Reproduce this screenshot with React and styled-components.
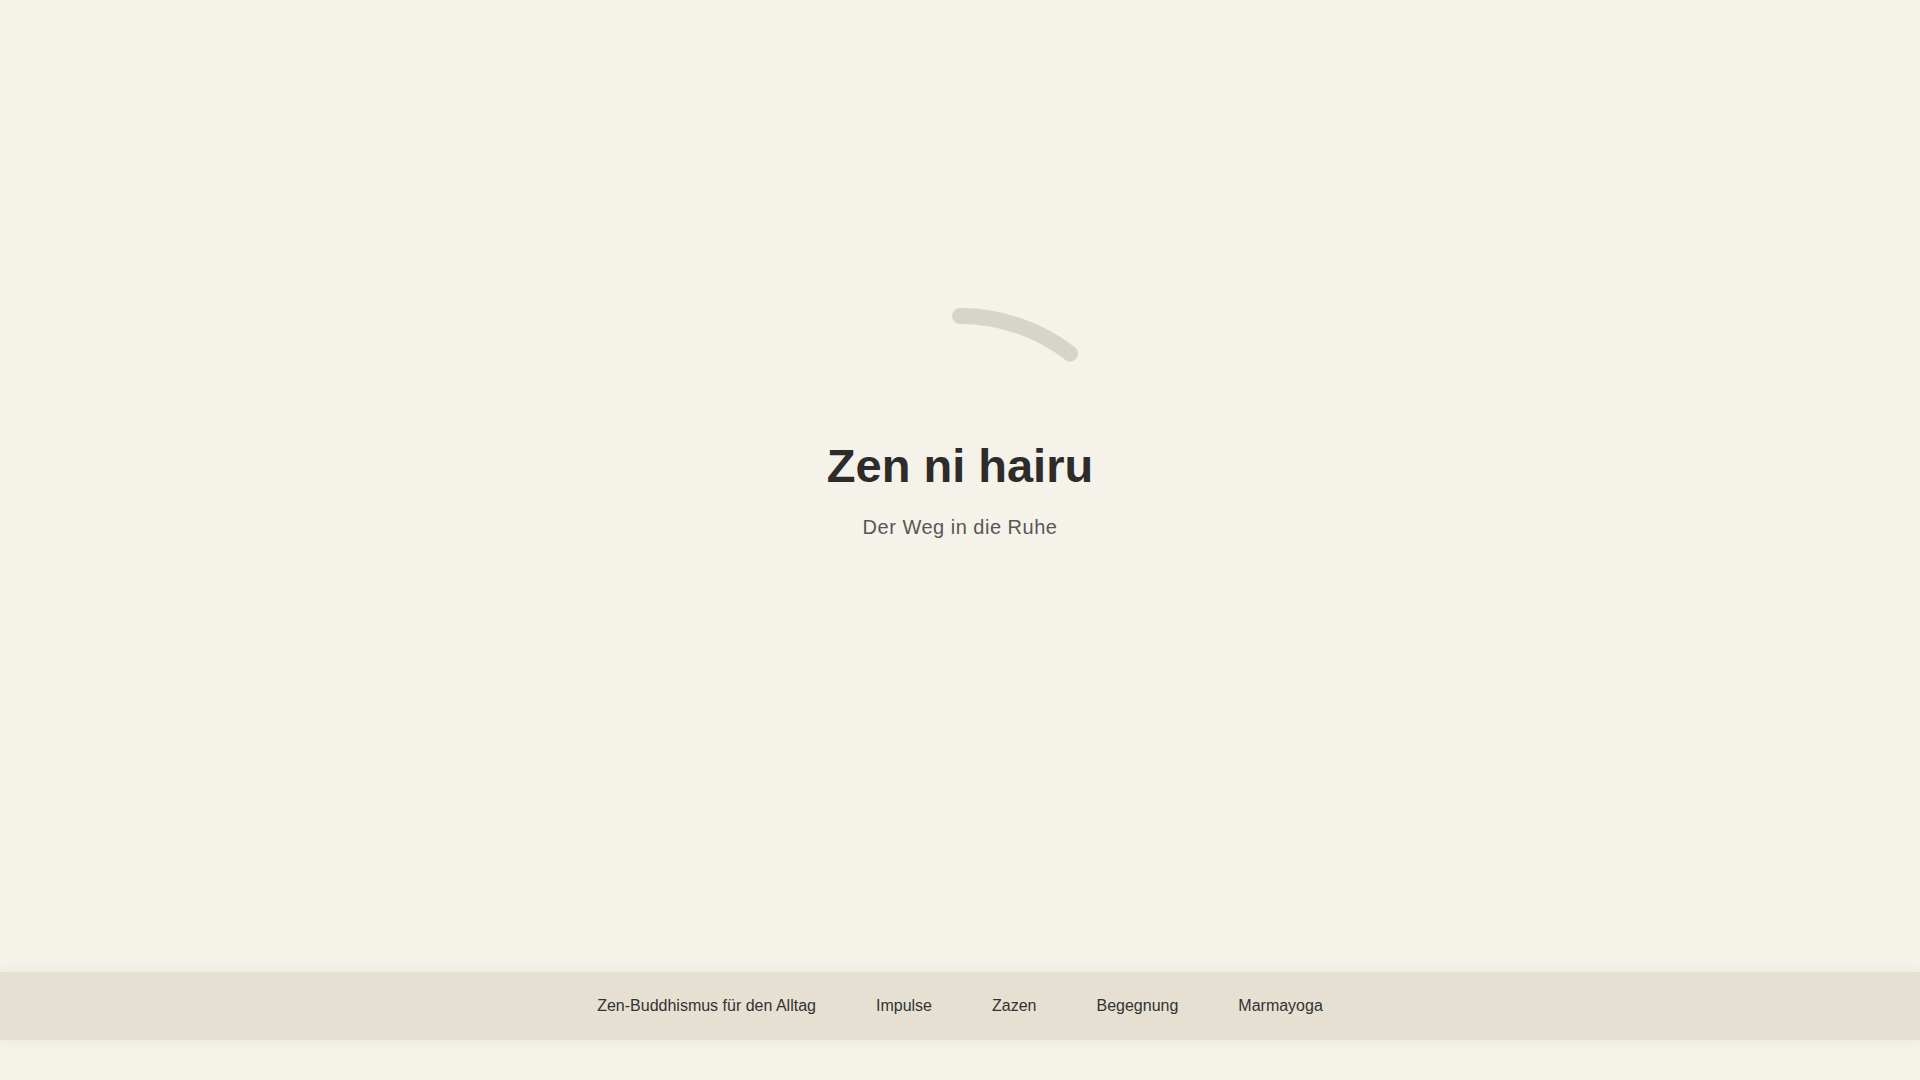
import React from 'react';
import styled, { createGlobalStyle } from 'styled-components';

const GlobalStyle = createGlobalStyle`
  html, body {
    margin: 0;
    padding: 0;
    background: #f5f2ea;
    font-family: 'Liberation Sans', Arial, sans-serif;
  }
  * { box-sizing: border-box; }
`;

const Page = styled.div`
  min-height: 100vh;
  display: flex;
  flex-direction: column;
  background: #f5f2ea;
`;

const Main = styled.main`
  flex: 1;
  display: flex;
  align-items: center;
  justify-content: center;
`;

// box around the enso circle, text sits inside it
const Stage = styled.div`
  position: relative;
  width: 376px;
  height: 376px;
  margin-top: 20px;
  padding-top: 130px;
  display: flex;
  flex-direction: column;
  align-items: center;
`;

const Enso = styled.svg`
  position: absolute;
  inset: 0;
  width: 100%;
  height: 100%;
  overflow: visible;
`;

const Title = styled.h1`
  position: relative;
  margin: 0;
  font-size: 47px;
  line-height: 1.2;
  font-weight: 700;
  color: #2d2c2a;
  white-space: nowrap;
`;

const Subtitle = styled.p`
  position: relative;
  margin: 21px 0 0;
  font-size: 20px;
  line-height: 1.2;
  letter-spacing: 0.5px;
  color: #585755;
  white-space: nowrap;
`;

const Footer = styled.footer`
  height: 68px;
  margin-bottom: 40px;
  background: #e6e0d3;
  box-shadow: 0 0 14px rgba(60, 50, 30, 0.06);
  display: flex;
  align-items: center;
  justify-content: center;
`;

const Nav = styled.nav`
  display: flex;
  gap: 60px;
`;

const NavLink = styled.a`
  font-size: 16px;
  color: #333230;
  text-decoration: none;
  cursor: pointer;
`;

const links = ['Zen-Buddhismus für den Alltag', 'Impulse', 'Zazen', 'Begegnung', 'Marmayoga'];

export default function App() {
  return (
    <Page>
      <GlobalStyle />
      <Main>
        <Stage>
          <Enso viewBox="0 0 376 376">
            <path
              d="M 188 8 A 180 180 0 0 1 298 45.5"
              fill="none"
              stroke="#d7d4cc"
              strokeWidth="16"
              strokeLinecap="round"
            />
          </Enso>
          <Title>Zen ni hairu</Title>
          <Subtitle>Der Weg in die Ruhe</Subtitle>
        </Stage>
      </Main>
      <Footer>
        <Nav>
          {links.map((l) => (
            <NavLink key={l}>{l}</NavLink>
          ))}
        </Nav>
      </Footer>
    </Page>
  );
}
